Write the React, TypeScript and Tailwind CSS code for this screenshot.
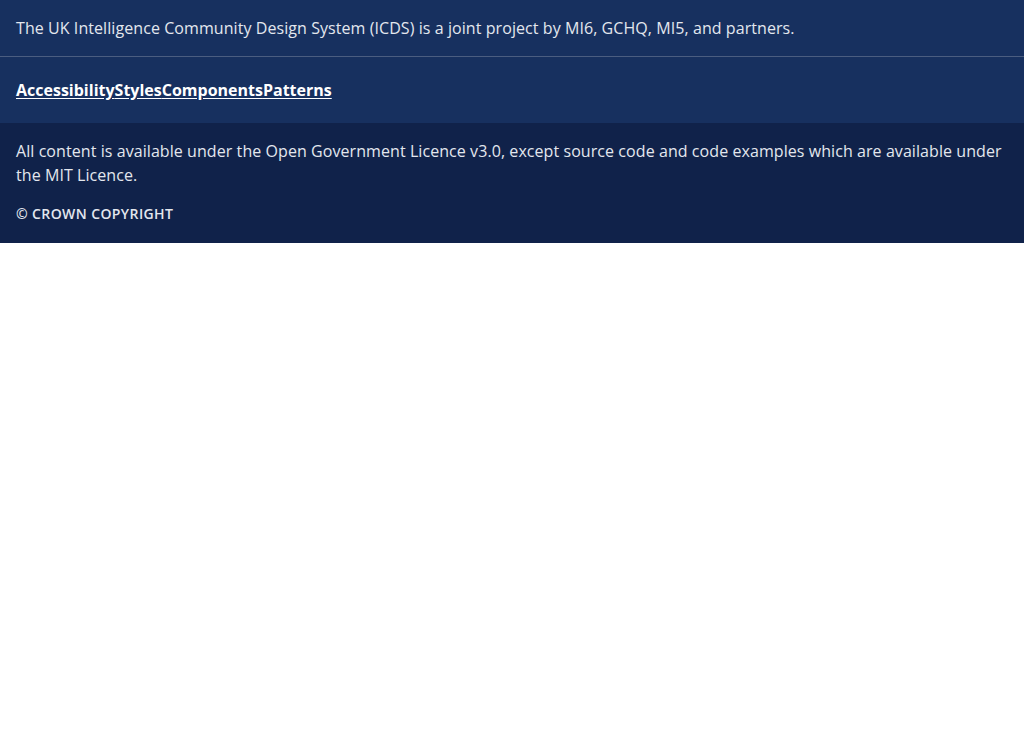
const links = ["Accessibility", "Styles", "Components", "Patterns"]

export default function App() {
  return (
    <div className="font-['Open_Sans',sans-serif] text-base">
      <div className="bg-[#17305f] px-4 py-4 leading-6 tracking-[0.07px] text-[#e3e7ee] border-b border-[#4b5d80]">
        The UK Intelligence Community Design System (ICDS) is a joint project by MI6, GCHQ, MI5, and partners.
      </div>
      <nav className="bg-[#17305f] px-4 py-[21px] leading-6">
        <ul className="flex">
          {links.map((l) => (
            <li key={l}>
              <a href="#" className="font-bold text-white underline underline-offset-2">
                {l}
              </a>
            </li>
          ))}
        </ul>
      </nav>
      <footer className="bg-[#10224a] px-4 pt-4 pb-[18px] text-[#e3e7ee]">
        <p className="leading-6 tracking-[0.07px]">
          All content is available under the Open Government Licence v3.0, except source code and code examples which are available under the MIT Licence.
        </p>
        <p className="mt-4 text-sm leading-[22px] font-semibold uppercase tracking-[0.4px]">
          © Crown Copyright
        </p>
      </footer>
    </div>
  )
}
